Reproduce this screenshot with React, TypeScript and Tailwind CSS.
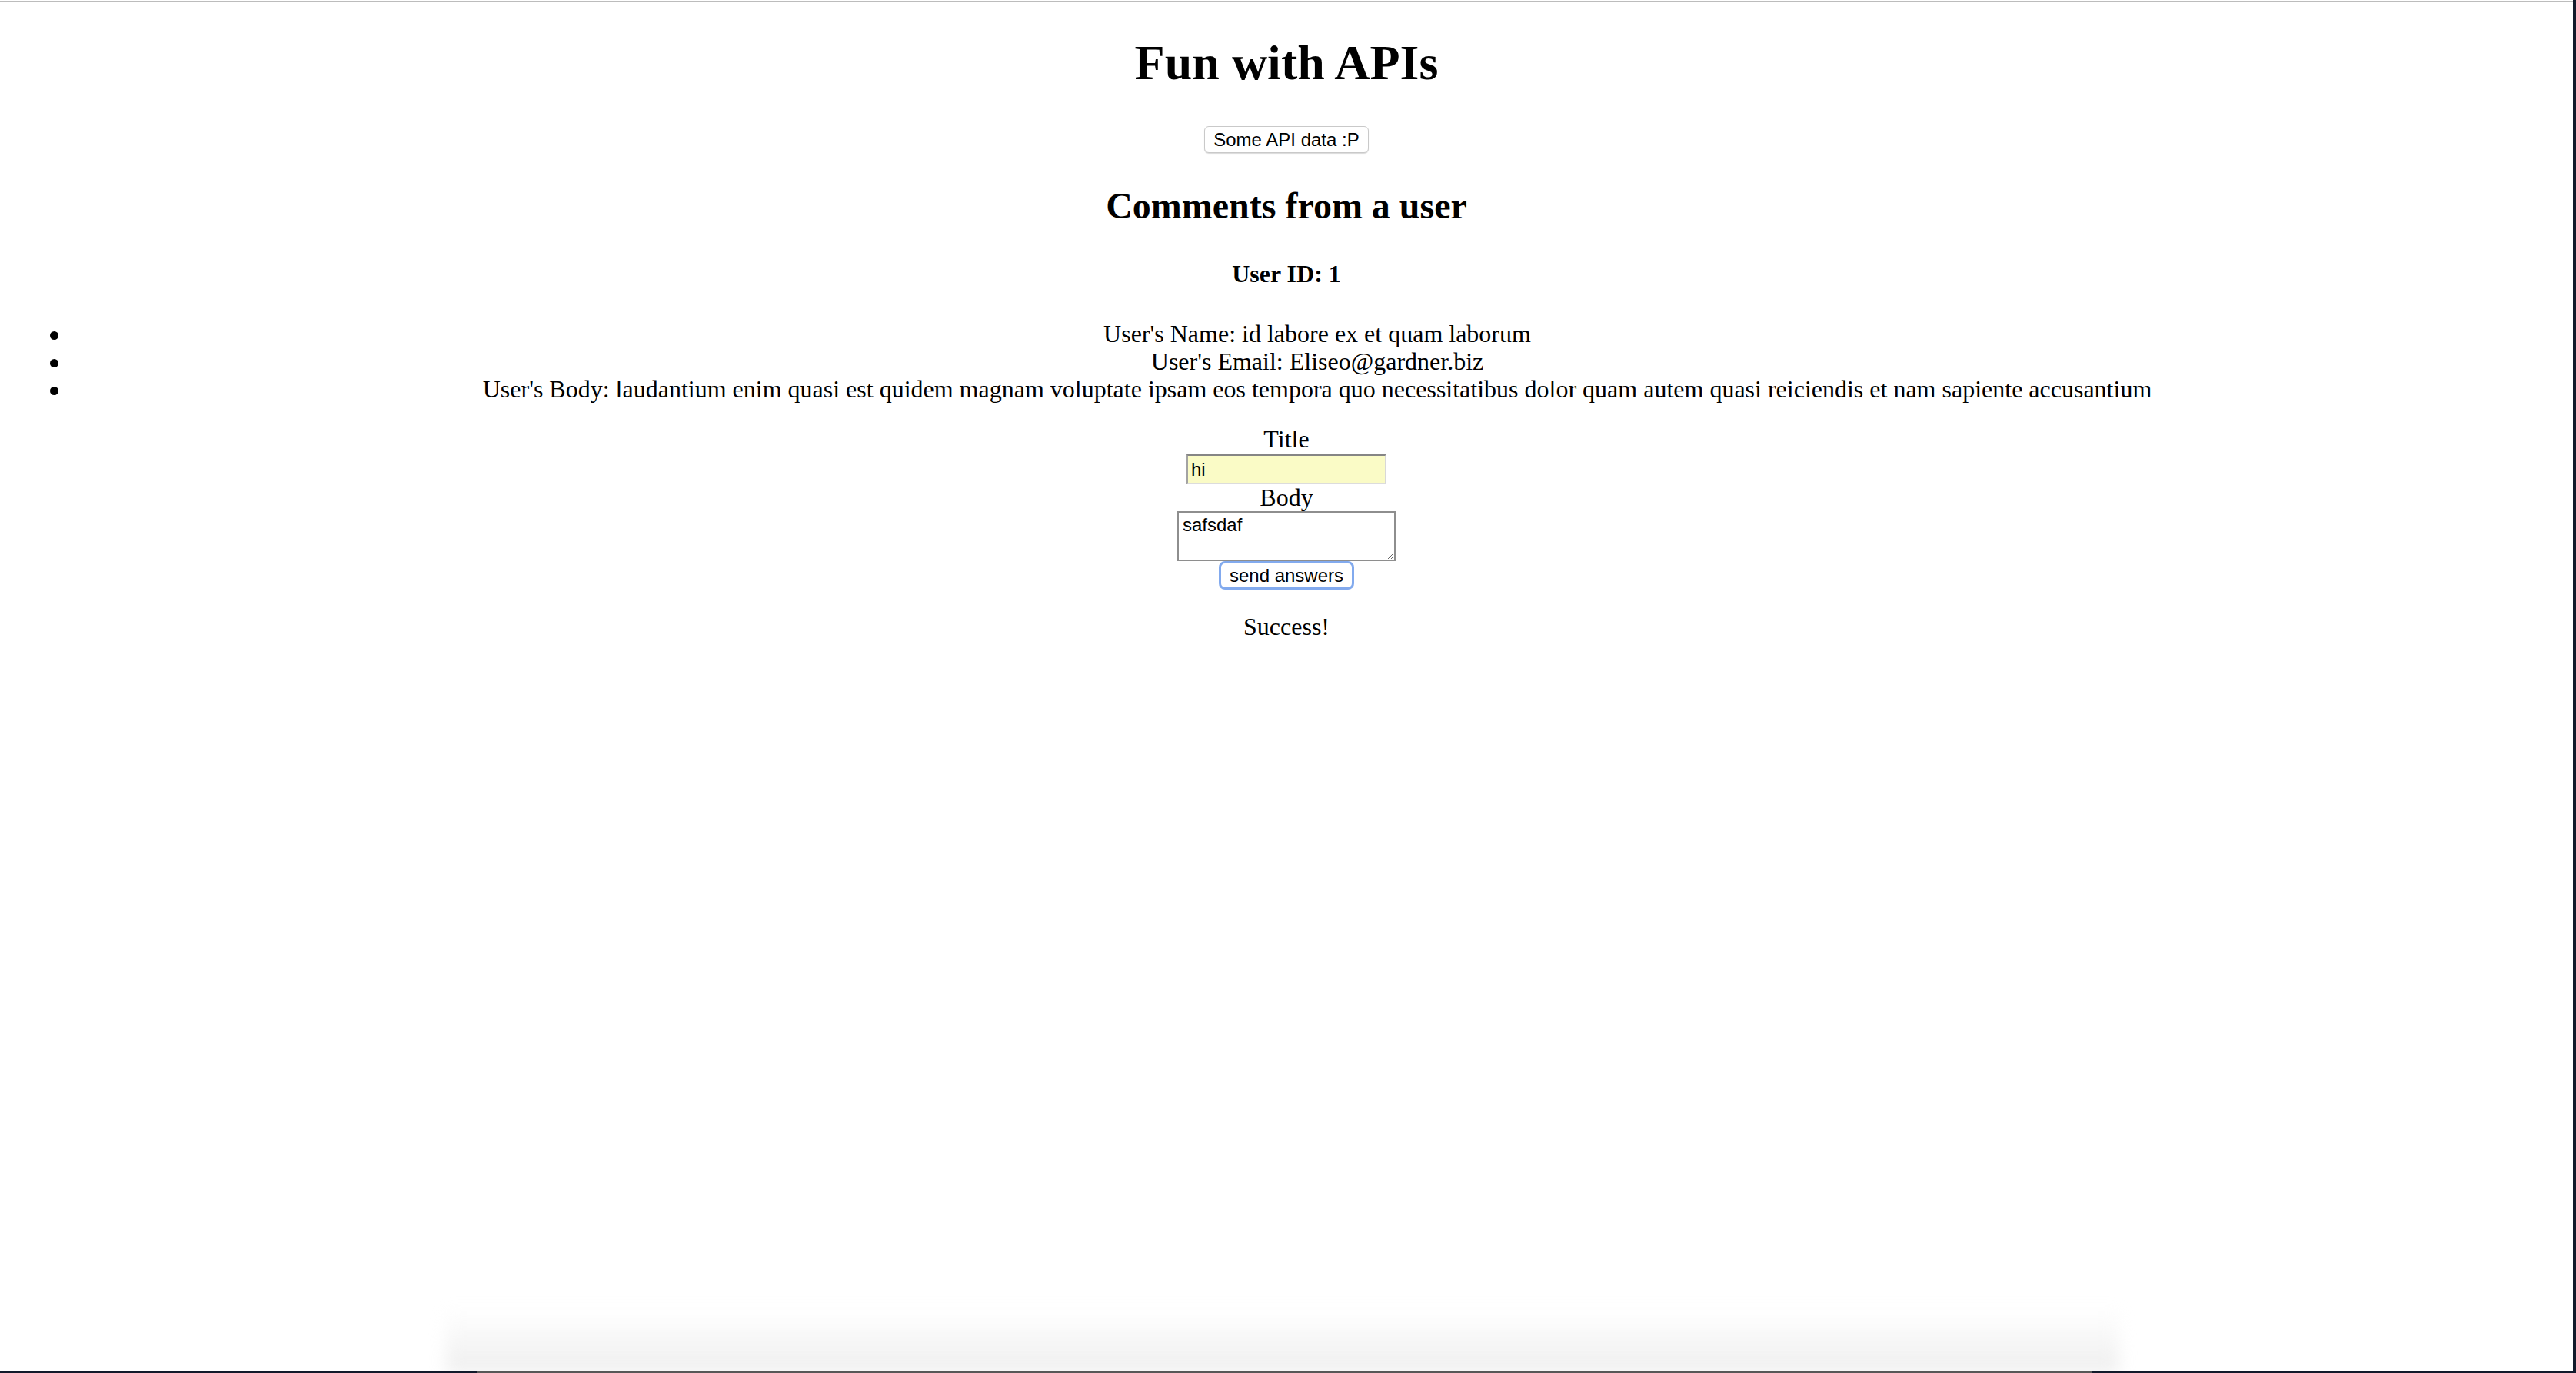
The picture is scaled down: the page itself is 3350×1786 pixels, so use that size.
import React from "react";

const serif = "font-['Liberation_Serif','Times_New_Roman',serif]";
const sans = "font-['Liberation_Sans',Arial,sans-serif]";

const userInfo = [
  "User's Name: id labore ex et quam laborum",
  "User's Email: Eliseo@gardner.biz",
  "User's Body: laudantium enim quasi est quidem magnam voluptate ipsam eos tempora quo necessitatibus dolor quam autem quasi reiciendis et nam sapiente accusantium",
];

const CommentForm = () => {
  return (
    <form className="mt-[29px] flex flex-col items-center" onSubmit={(e) => e.preventDefault()}>
      <label className="block text-[32px] leading-[37px]">Title</label>
      <input
        defaultValue="hi"
        className={`${sans} mt-[1px] block w-[260px] h-[39px] px-[4px] text-[24px] text-black bg-[#fafbc6] border-2 border-t-[#858585] border-l-[#a3a3a3] border-r-[#d8d8d8] border-b-[#dcdcdc] outline-none`}
      />
      <label className="block mt-[0px] text-[32px] leading-[35px]">Body</label>
      <textarea
        defaultValue="safsdaf"
        className={`${sans} block w-[284px] h-[65px] px-[5px] py-[2px] text-[24px] leading-[28px] text-black bg-white border-2 border-[#8e8e8e] outline-none`}
      />
      <button
        type="submit"
        className={`${sans} block h-[37px] px-[11px] text-[24px] leading-[28px] text-black bg-white border-[3px] border-[#82aaee] rounded-[8px]`}
      >
        send answers
      </button>
    </form>
  );
};

const App = () => {
  return (
    <div className="relative flex h-[1786px] w-full overflow-hidden bg-[#121a2b]">
      <div className={`${serif} relative flex-1 flex flex-col bg-white text-black text-center`}>
        <div className="h-[1px] bg-white" />
        <div className="h-[2px] bg-[#bcbcbc]" />

        <h1 className="mt-[42px] text-[64px] leading-[74px] font-bold">Fun with APIs</h1>

        <div className="mt-[45px] flex justify-center">
          <button
            className={`${sans} h-[35px] px-[11px] text-[24px] leading-[28px] text-black bg-white border border-[#c9c9c9] rounded-[6px] shadow-[0_1px_1px_rgba(0,0,0,0.15)]`}
          >
            Some API data :P
          </button>
        </div>

        <h2 className="mt-[41px] text-[48px] leading-[55px] font-bold">Comments from a user</h2>
        <h4 className="mt-[43px] text-[32px] leading-[37px] font-bold">User ID: 1</h4>

        <ul className="mt-[41px] text-[32px] leading-[36px]">
          {userInfo.map((line) => (
            <li key={line} className="flex">
              <span className="w-[80px] shrink-0 flex items-center pl-[65px] pt-[5px]">
                <span className="block w-[11px] h-[11px] rounded-full bg-black" />
              </span>
              <span className="flex-1 text-center">{line}</span>
            </li>
          ))}
        </ul>

        <CommentForm />

        <p className="mt-[30px] text-[32px] leading-[37px]">Success!</p>

        <div className="absolute bottom-0 left-[580px] right-[590px] h-[84px] bg-gradient-to-b from-white/0 to-[#eeeeee] blur-[10px]" />
        <div className="absolute bottom-0 left-0 right-0 h-[3px] flex">
          <div className="w-[620px] bg-[#121a2b]" />
          <div className="flex-1 bg-[#575757]" />
          <div className="w-[626px] bg-[#121a2b]" />
        </div>
      </div>
      <div className="w-[4px] bg-[#121a2b]" />
    </div>
  );
};

export default App;
